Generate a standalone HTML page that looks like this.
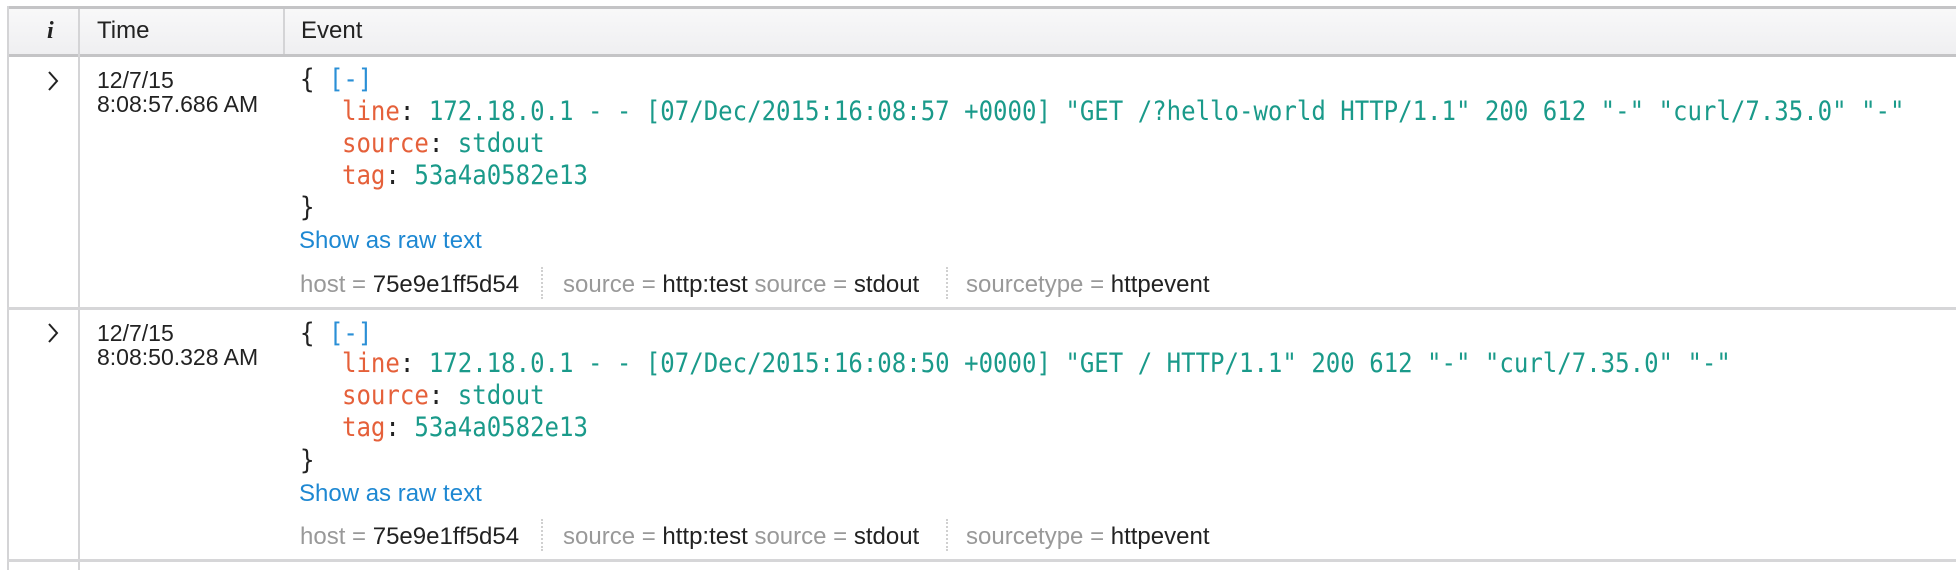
<!DOCTYPE html>
<html><head><meta charset="utf-8"><style>
body{margin:0;width:1956px;height:570px;background:#fff;position:relative;overflow:hidden;font-family:"Liberation Sans",Arial,sans-serif;color:#222}
.a{position:absolute;white-space:pre;line-height:1}
.hdr{position:absolute;left:7px;top:6px;width:1949px;height:45px;background:linear-gradient(#f8f8f9,#efeff1);border-top:3px solid #c4c4c6;border-bottom:3px solid #c4c4c6}
.vl{position:absolute;width:2px;background:#d4d4d6}
.hl{position:absolute;left:7px;width:1949px;height:3px;background:#d6d6d8}
.t{font-size:23px}
.m{font-family:"DejaVu Sans Mono","Liberation Mono",monospace;font-size:27px;transform:scaleX(0.89);transform-origin:0 0;margin-top:-2px}
.k{color:#e5603a}.v{color:#1a9a8a}.b{color:#2a8fd6}
.s{font-size:24px;color:#1e88d2}
.meta{font-size:24px;color:#999}.meta b{font-weight:normal;color:#222}
.dot{position:absolute;width:0;border-left:2px dotted #d0d0d0}
</style></head><body>
<div class="hdr"></div>
<div class="vl" style="left:7px;top:6px;height:564px"></div>
<div class="vl" style="left:78px;top:9px;height:561px"></div>
<div class="vl" style="left:283px;top:9px;height:45px"></div>
<div class="a" style="left:47px;top:19px;font-family:'Liberation Serif',serif;font-style:italic;font-weight:bold;font-size:24px">i</div>
<div class="a" style="left:97px;top:19px;font-size:24px">Time</div>
<div class="a" style="left:301px;top:19px;font-size:24px">Event</div>

<div class="hl" style="top:307px"></div>
<div class="hl" style="top:559px"></div>

<!-- row 1 -->
<svg class="a" style="left:46px;top:70px" width="14" height="22"><path d="M3 2 L11 11 L3 20" stroke="#222" stroke-width="2" fill="none"/></svg>
<div class="a t" style="left:97px;top:69px">12/7/15</div>
<div class="a t" style="left:97px;top:93px">8:08:57.686 AM</div>
<div class="a m" style="left:300px;top:68px">{ <span class="b">[-]</span></div>
<div class="a m" style="left:342px;top:100px"><span class="k">line</span>: <span class="v">172.18.0.1 - - [07/Dec/2015:16:08:57 +0000] "GET /?hello-world HTTP/1.1" 200 612 "-" "curl/7.35.0" "-"</span></div>
<div class="a m" style="left:342px;top:132px"><span class="k">source</span>: <span class="v">stdout</span></div>
<div class="a m" style="left:342px;top:164px"><span class="k">tag</span>: <span class="v">53a4a0582e13</span></div>
<div class="a m" style="left:300px;top:196px">}</div>
<div class="a s" style="left:299px;top:229px">Show as raw text</div>
<div class="a meta" style="left:300px;top:273px">host = <b>75e9e1ff5d54</b></div>
<div class="dot" style="left:541px;top:267px;height:32px"></div>
<div class="a meta" style="left:563px;top:273px">source = <b>http:test</b> source = <b>stdout</b></div>
<div class="dot" style="left:946px;top:267px;height:32px"></div>
<div class="a meta" style="left:966px;top:273px">sourcetype = <b>httpevent</b></div>

<!-- row 2 -->
<svg class="a" style="left:46px;top:322px" width="14" height="22"><path d="M3 2 L11 11 L3 20" stroke="#222" stroke-width="2" fill="none"/></svg>
<div class="a t" style="left:97px;top:322px">12/7/15</div>
<div class="a t" style="left:97px;top:346px">8:08:50.328 AM</div>
<div class="a m" style="left:300px;top:322px">{ <span class="b">[-]</span></div>
<div class="a m" style="left:342px;top:352px"><span class="k">line</span>: <span class="v">172.18.0.1 - - [07/Dec/2015:16:08:50 +0000] "GET / HTTP/1.1" 200 612 "-" "curl/7.35.0" "-"</span></div>
<div class="a m" style="left:342px;top:384px"><span class="k">source</span>: <span class="v">stdout</span></div>
<div class="a m" style="left:342px;top:416px"><span class="k">tag</span>: <span class="v">53a4a0582e13</span></div>
<div class="a m" style="left:300px;top:449px">}</div>
<div class="a s" style="left:299px;top:482px">Show as raw text</div>
<div class="a meta" style="left:300px;top:525px">host = <b>75e9e1ff5d54</b></div>
<div class="dot" style="left:541px;top:519px;height:32px"></div>
<div class="a meta" style="left:563px;top:525px">source = <b>http:test</b> source = <b>stdout</b></div>
<div class="dot" style="left:946px;top:519px;height:32px"></div>
<div class="a meta" style="left:966px;top:525px">sourcetype = <b>httpevent</b></div>
</body></html>
